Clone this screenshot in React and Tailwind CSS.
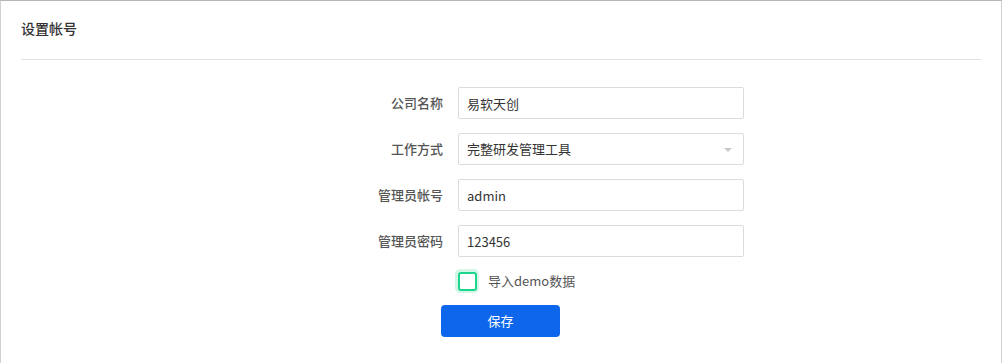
import React from "react";

const font = { fontFamily: '"Noto Sans CJK SC", "Noto Sans", sans-serif' };

function Row({ label, children }) {
  return (
    <div className="flex items-center gap-[15px]">
      <div className="w-[185px] text-right text-[13px] font-medium text-[#555]">{label}</div>
      <div className="flex-1">{children}</div>
    </div>
  );
}

function TextInput({ value }) {
  return (
    <input
      readOnly
      value={value}
      className="h-[32px] w-full rounded-[2px] border border-[#dcdcdc] bg-white px-[8px] text-[13px] text-[#333] outline-none"
      style={font}
    />
  );
}

export default function App() {
  return (
    <div
      className="h-[363px] w-[1002px] overflow-hidden border-t border-l border-r border-t-[#b5b5b5] border-l-[#d0d0d0] border-r-[#d0d0d0] bg-white"
      style={font}
    >
      <div className="mx-5 border-b border-[#e3e3e3] pt-[17px] pb-[21px]">
        <div className="text-[14px] leading-[20px] font-medium text-[#333]">设置帐号</div>
      </div>
      <div className="mx-auto mt-[27px] flex w-[486px] flex-col gap-[14px]">
        <Row label="公司名称">
          <TextInput value="易软天创" />
        </Row>
        <Row label="工作方式">
          <div className="relative flex h-[32px] w-full items-center rounded-[2px] border border-[#dcdcdc] bg-white px-[8px] text-[13px] text-[#333]">
            完整研发管理工具
            <span className="absolute right-[11px] top-[14px] h-0 w-0 border-x-[4px] border-t-[4px] border-x-transparent border-t-[#c8c8c8]" />
          </div>
        </Row>
        <Row label="管理员帐号">
          <TextInput value="admin" />
        </Row>
        <Row label="管理员密码">
          <TextInput value="123456" />
        </Row>
        <div className="flex h-[20px] items-center pl-[200px]">
          <span className="-my-[2px] -ml-[3px] flex h-[24px] w-[24px] shrink-0 items-center justify-center rounded-[5px] bg-[#d3f6e7]">
            <span className="h-[19px] w-[19px] rounded-[3px] border-2 border-[#1dd48c] bg-white" />
          </span>
          <span className="ml-[9px] text-[13px] text-[#555]">导入demo数据</span>
        </div>
        <div className="flex justify-center pr-[1px]">
          <button className="h-[32px] w-[119px] rounded-[4px] bg-[#0d66eb] text-[13px] text-white">
            保存
          </button>
        </div>
      </div>
    </div>
  );
}
